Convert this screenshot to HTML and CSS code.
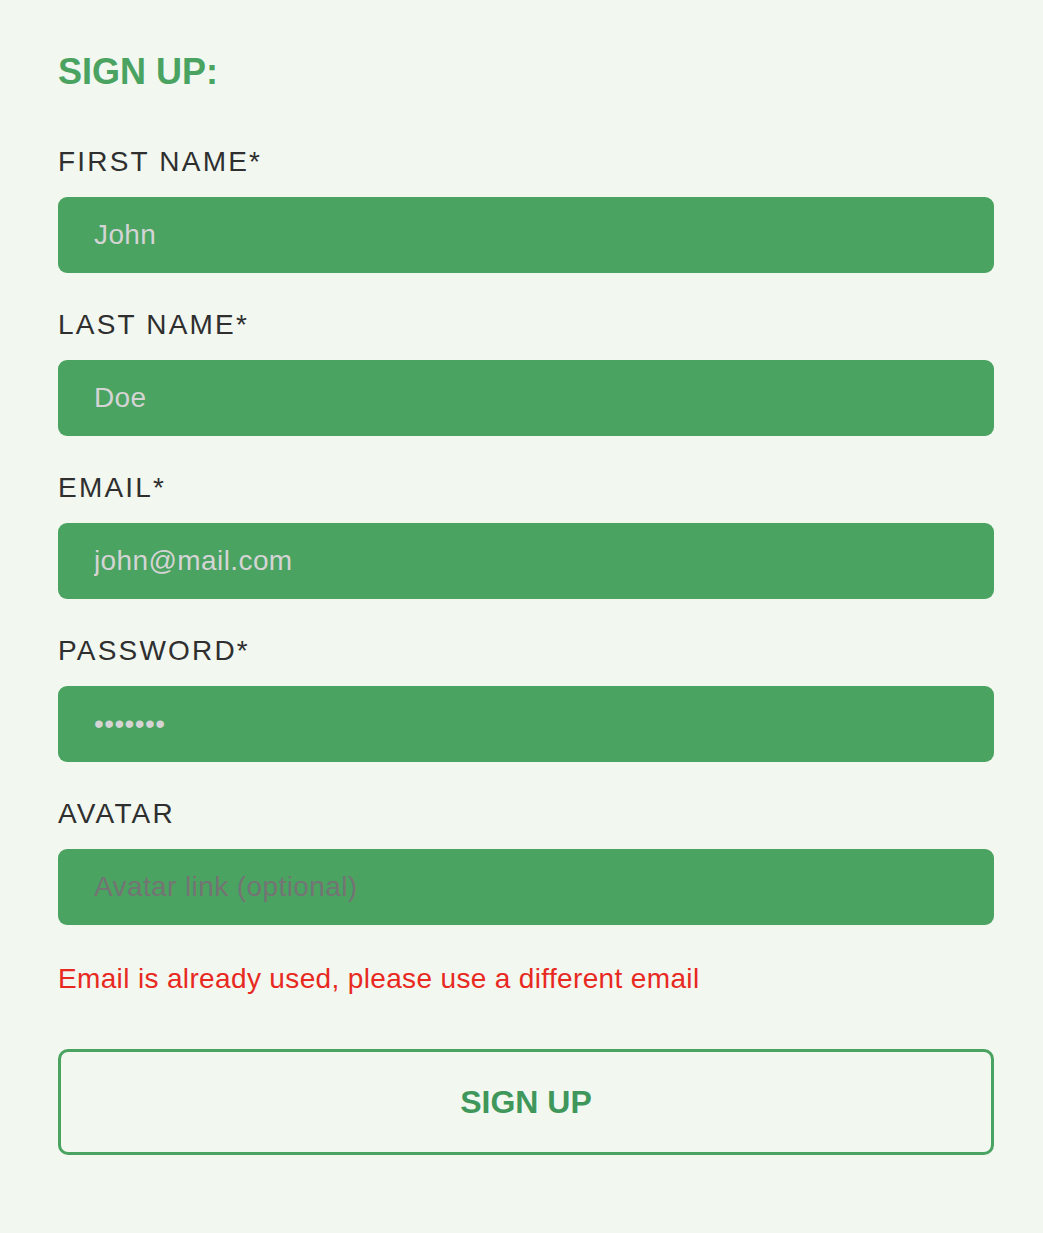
FILE: index.html
```html
<!DOCTYPE html>
<html lang="en">
<head>
<meta charset="utf-8">
<title>Sign up</title>
<link rel="stylesheet" href="styles.css">
</head>
<body>
<form class="signup" onsubmit="return false">
  <h1 class="title">SIGN UP:</h1>
  <div class="field">
    <label class="label" for="first">FIRST NAME*</label>
    <input class="input" id="first" type="text" value="John">
  </div>
  <div class="field">
    <label class="label" for="last">LAST NAME*</label>
    <input class="input" id="last" type="text" value="Doe">
  </div>
  <div class="field">
    <label class="label" for="email">EMAIL*</label>
    <input class="input" id="email" type="text" value="john@mail.com">
  </div>
  <div class="field">
    <label class="label" for="pass">PASSWORD*</label>
    <input class="input" id="pass" type="password" value="1234567">
  </div>
  <div class="field">
    <label class="label" for="avatar">AVATAR</label>
    <input class="input" id="avatar" type="text" placeholder="Avatar link (optional)">
  </div>
  <p class="error">Email is already used, please use a different email</p>
  <button class="submit" type="submit">SIGN UP</button>
</form>
</body>
</html>
```
FILE: styles.css
```css
html, body {
  margin: 0;
  padding: 0;
  background: #f2f7f0;
}
body {
  font-family: "Liberation Sans", Arial, sans-serif;
  min-height: 1233px;
}
.signup {
  width: 936px;
  padding: 52px 0 0 58px;
  display: flex;
  flex-direction: column;
}
.title {
  margin: 0 0 54px;
  font-size: 36px;
  line-height: 40px;
  font-weight: 700;
  color: #4aa361;
}
.field {
  display: flex;
  flex-direction: column;
  gap: 19px;
  margin-bottom: 36px;
}
.field:last-of-type {
  margin-bottom: 38px;
}
.label {
  font-size: 28px;
  line-height: 32px;
  letter-spacing: 2.2px;
  color: #2f2f2f;
}
.input {
  box-sizing: border-box;
  height: 76px;
  width: 100%;
  border: none;
  border-radius: 9px;
  background: #4aa361;
  padding: 0 36px;
  font-family: "Liberation Sans", Arial, sans-serif;
  font-size: 28px;
  letter-spacing: 0.4px;
  color: #d4d4d4;
  outline: none;
}
.input::placeholder {
  color: #747474;
  opacity: 1;
}
.error {
  margin: 0 0 54px;
  font-size: 28px;
  line-height: 32px;
  letter-spacing: 0.35px;
  color: #e8291f;
}
.submit {
  box-sizing: border-box;
  height: 106px;
  width: 100%;
  background: transparent;
  border: 3px solid #4aa361;
  border-radius: 10px;
  font-family: "Liberation Sans", Arial, sans-serif;
  font-size: 32px;
  font-weight: 700;
  color: #3f975b;
  cursor: pointer;
}
```
